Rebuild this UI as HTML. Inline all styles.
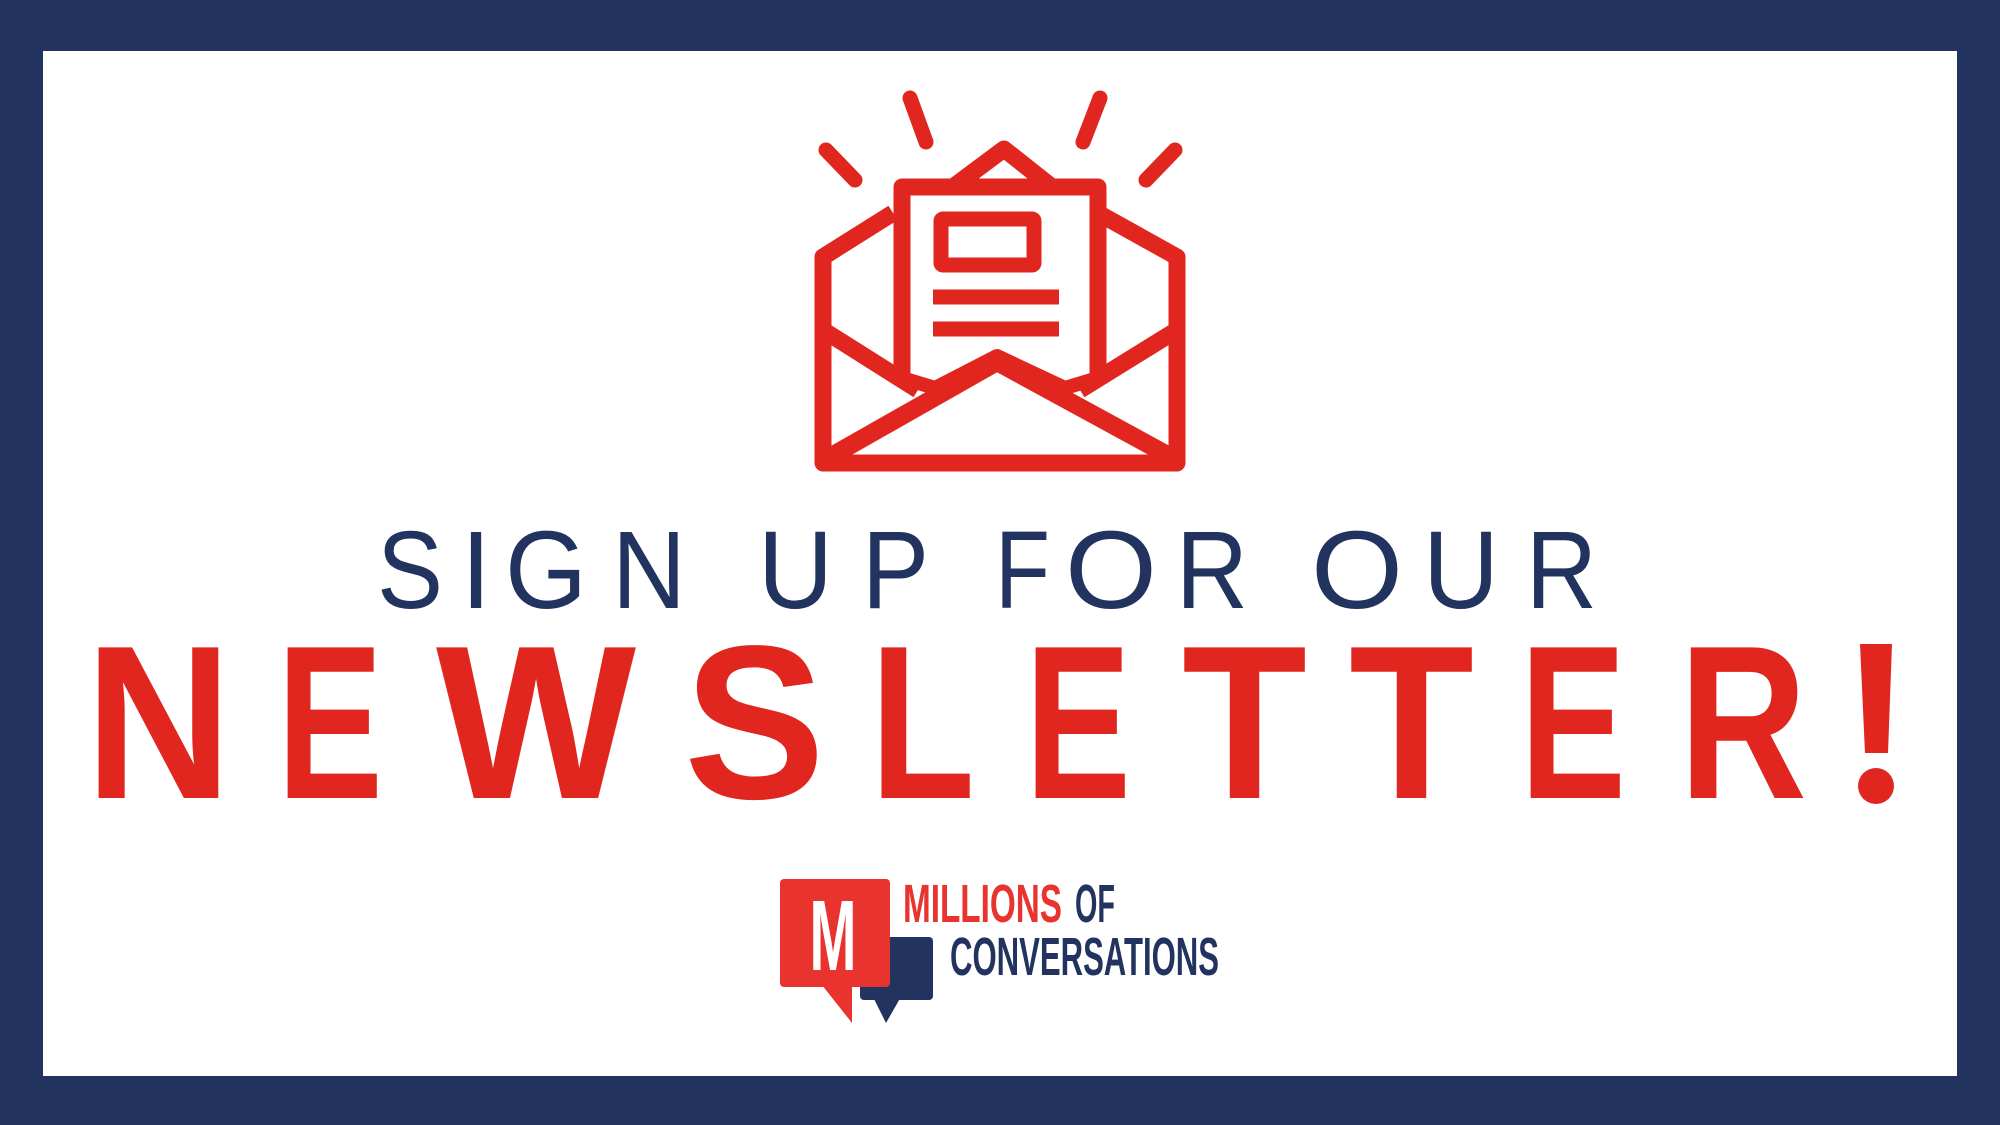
<!DOCTYPE html>
<html><head><meta charset="utf-8"><style>
html,body{margin:0;padding:0;background:#21335e;}
svg{display:block}
</style></head><body>
<svg width="2000" height="1125" viewBox="0 0 2000 1125" xmlns="http://www.w3.org/2000/svg">
<rect x="0" y="0" width="2000" height="1125" fill="#21335e"/>
<rect x="43" y="51" width="1914" height="1025" fill="#ffffff"/>
<g fill="none" stroke="#e0261f" stroke-width="17" stroke-linejoin="round">
  <g stroke-linecap="round" stroke-width="15">
    <line x1="910" y1="98" x2="926" y2="142"/>
    <line x1="1100" y1="98" x2="1083" y2="142"/>
    <line x1="826" y1="150" x2="855" y2="180"/>
    <line x1="1175" y1="150" x2="1146" y2="180"/>
  </g>
  <polyline points="893,213 823,257 823,463 1177,463 1177,257 1098,213"/>
  <polyline points="902,380 902,187 1098,187 1098,380"/>
  <polyline points="953,187 1004,149 1052,187"/>
  <rect x="941" y="219" width="93" height="46" stroke-width="15" rx="2"/>
  <line x1="933" y1="297" x2="1059" y2="297" stroke-width="15"/>
  <line x1="933" y1="329" x2="1059" y2="329" stroke-width="15"/>
  <polyline points="828,458 997,362 1173,458" stroke-width="18"/>
  <polyline points="902,378 935,388 997,356 1065,388 1098,378" stroke-width="14"/>
  <line x1="823" y1="330" x2="918" y2="390"/>
  <line x1="1177" y1="330" x2="1080" y2="390"/>
</g>
<g font-family="Liberation Sans, sans-serif" fill="#21335e" font-size="110">
  <text x="377" y="608" textLength="66" lengthAdjust="spacingAndGlyphs">S</text>
  <text x="476" y="608" text-anchor="middle">I</text>
  <text x="505" y="608" textLength="82" lengthAdjust="spacingAndGlyphs">G</text>
  <text x="612" y="608" textLength="74" lengthAdjust="spacingAndGlyphs">N</text>
  <text x="758" y="608" textLength="75" lengthAdjust="spacingAndGlyphs">U</text>
  <text x="862" y="608" textLength="67" lengthAdjust="spacingAndGlyphs">P</text>
  <text x="995" y="608" textLength="55" lengthAdjust="spacingAndGlyphs">F</text>
  <text x="1065" y="608" textLength="92" lengthAdjust="spacingAndGlyphs">O</text>
  <text x="1176" y="608" textLength="72" lengthAdjust="spacingAndGlyphs">R</text>
  <text x="1311" y="608" textLength="92" lengthAdjust="spacingAndGlyphs">O</text>
  <text x="1423" y="608" textLength="76" lengthAdjust="spacingAndGlyphs">U</text>
  <text x="1526" y="608" textLength="71" lengthAdjust="spacingAndGlyphs">R</text>
</g>
<g font-family="Liberation Sans, sans-serif" fill="#e0261f" font-size="219" font-weight="bold">
  <text x="85" y="798" textLength="147" lengthAdjust="spacingAndGlyphs">N</text>
  <text x="277" y="798" textLength="106" lengthAdjust="spacingAndGlyphs">E</text>
  <text x="436" y="798" textLength="200" lengthAdjust="spacingAndGlyphs">W</text>
  <text x="684" y="798" textLength="141" lengthAdjust="spacingAndGlyphs">S</text>
  <text x="870" y="798" textLength="105" lengthAdjust="spacingAndGlyphs">L</text>
  <text x="1025" y="798" textLength="106" lengthAdjust="spacingAndGlyphs">E</text>
  <text x="1182" y="798" textLength="125" lengthAdjust="spacingAndGlyphs">T</text>
  <text x="1349" y="798" textLength="125" lengthAdjust="spacingAndGlyphs">T</text>
  <text x="1520" y="798" textLength="106" lengthAdjust="spacingAndGlyphs">E</text>
  <text x="1679" y="798" textLength="128" lengthAdjust="spacingAndGlyphs">R</text>
</g>
<polygon points="1860,644 1892,644 1888,753 1865,753" fill="#e0261f"/>
<circle cx="1876" cy="786" r="18" fill="#e0261f"/>
<!-- logo -->
<rect x="860" y="937" width="73" height="63" rx="4" fill="#21335e"/>
<polygon points="872,995 902,995 886,1023" fill="#21335e"/>
<rect x="780" y="879" width="110" height="108" rx="4" fill="#e8332f"/>
<polygon points="818,980 852,980 852,1023" fill="#e8332f"/>
<text x="833" y="970" text-anchor="middle" font-family="Liberation Sans, sans-serif" font-weight="bold" font-size="100" fill="#ffffff" textLength="47" lengthAdjust="spacingAndGlyphs">M</text>
<g font-family="Liberation Sans, sans-serif" font-size="54" font-weight="bold">
  <text x="903" y="922" fill="#e8332f" textLength="159" lengthAdjust="spacingAndGlyphs">MILLIONS</text>
  <text x="1075" y="922" fill="#21335e" textLength="40" lengthAdjust="spacingAndGlyphs">OF</text>
  <text x="950" y="975" fill="#21335e" textLength="269" lengthAdjust="spacingAndGlyphs">CONVERSATIONS</text>
</g>
</svg>
</body></html>
